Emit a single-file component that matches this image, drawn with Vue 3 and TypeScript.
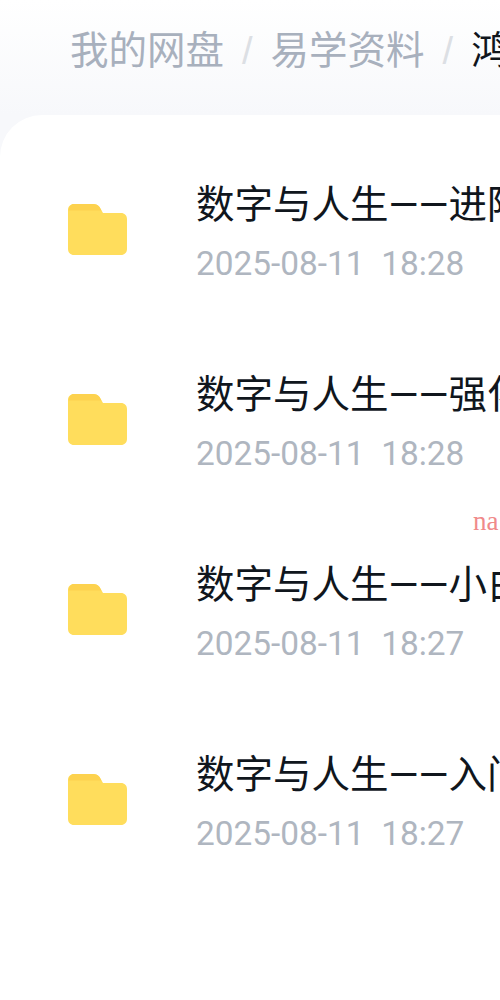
<script setup lang="ts">
interface FileRow { name: string; time: string }
const rows: FileRow[] = [
  { name: '数字与人生——进阶', time: '2025-08-11  18:28' },
  { name: '数字与人生——强化', time: '2025-08-11  18:28' },
  { name: '数字与人生——小白', time: '2025-08-11  18:27' },
  { name: '数字与人生——入门', time: '2025-08-11  18:27' },
]
</script>

<template>
  <div class="page">
    <nav class="crumbs">
      <span class="crumb">我的网盘</span>
      <span class="sep">/</span>
      <span class="crumb">易学资料</span>
      <span class="sep">/</span>
      <span class="crumb current">鸿蒙</span>
    </nav>
    <main class="card">
      <div v-for="row in rows" :key="row.name" class="row">
        <svg class="folder" width="59" height="51" viewBox="0 0 59 51">
          <path d="M6 0H25C28 0 30 1 31.500 3L35 9H53C56.500 9 59 11.500 59 15V45C59 48.500 56.500 51 53 51H6C2.500 51 0 48.500 0 45V6C0 2.500 2.500 0 6 0Z" fill="#ffdd5c" />
          <path d="M6 0H25C28 0 30 1 31.500 3L33.500 6.500H0.500C1 2.500 3 0 6 0Z" fill="#fdd24e" />
        </svg>
        <div class="info">
          <div class="name">{{ row.name }}</div>
          <div class="time">{{ row.time }}</div>
        </div>
      </div>
    </main>
    <span class="mark">na</span>
  </div>
</template>

<style>
html, body { margin: 0; background: #fff; }
</style>

<style scoped>
.page {
  position: relative;
  width: 500px;
  height: 1000px;
  overflow: hidden;
  background: linear-gradient(180deg, #ffffff 0, #f7f8fb 115px);
  font-family: Roboto, "Noto Sans CJK SC", sans-serif;
}
.crumbs {
  display: flex;
  align-items: center;
  gap: 18px;
  height: 102px;
  padding-left: 70px;
  white-space: nowrap;
  font-size: 38.5px;
  line-height: 102px;
  width: 600px;
}
.crumb { color: #a8b0bd; }
.current { color: #10151c; }
.sep { color: #dcdfe4; font-size: 38px; font-family: "Liberation Sans", sans-serif; }
.card {
  height: 885px;
  margin-top: 13px;
  padding-top: 20px;
  background: #fff;
  border-radius: 42px 0 0 0;
}
.row {
  display: flex;
  align-items: center;
  gap: 69px;
  height: 190px;
  padding-left: 68px;
  box-sizing: border-box;
}
.folder { flex: none; margin-bottom: 1px; }
.info { flex: none; white-space: nowrap; padding: 4px 0 3px; }
.name {
  color: #10161d;
  font-size: 38.5px;
  line-height: 56px;
}
.time {
  margin-top: 11px;
  color: #afb6c0;
  font-size: 33.4px;
  line-height: 40px;
  white-space: pre;
}
.mark {
  position: absolute;
  left: 473px;
  top: 506px;
  color: #f08a8a;
  font-family: "Liberation Serif", serif;
  font-size: 27px;
  line-height: 30px;
}
</style>
